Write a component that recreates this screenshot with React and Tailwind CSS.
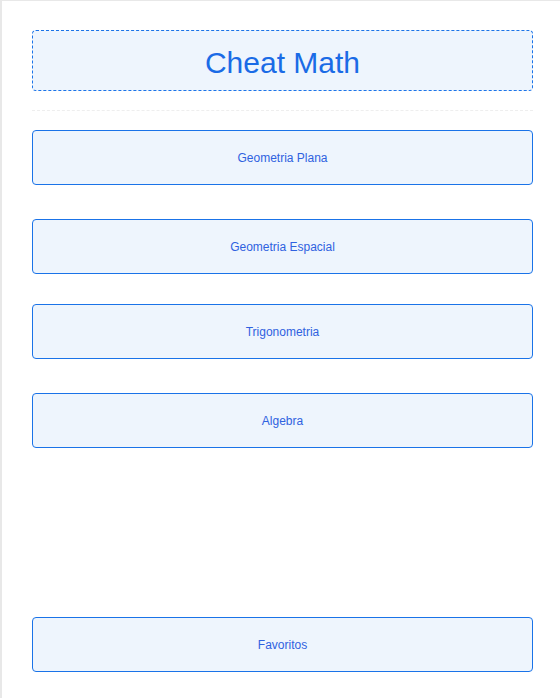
const topics = [
  { label: 'Geometria Plana', mt: 'mt-0' },
  { label: 'Geometria Espacial', mt: 'mt-[34px]' },
  { label: 'Trigonometria', mt: 'mt-[30px]' },
  { label: 'Algebra', mt: 'mt-[34px]' },
];

function TopicButton({ label, className = '' }) {
  return (
    <button
      className={`w-full h-[55px] flex items-center justify-center bg-[#eef5fd] border border-[#1a73e8] rounded-[4px] text-[12px] text-[#2f62e0] ${className}`}
    >
      {label}
    </button>
  );
}

export default function App() {
  return (
    <div
      className="h-[698px] w-[560px] bg-white border-t border-l-2 border-[#e8e8e8] pl-[30px] pr-[27px] pt-[29px] flex flex-col"
      style={{ fontFamily: '"Liberation Sans", Arial, sans-serif' }}
    >
      <div className="h-[61px] flex items-center justify-center bg-[#eef5fd] border border-dashed border-[#1a73e8] rounded-[4px]">
        <h1 className="mt-[4px] text-[30px] text-[#1a6be6] leading-none">Cheat Math</h1>
      </div>

      <hr className="mt-[19px] mb-[19px] border-t border-dashed border-[#eeeeee]" />

      {topics.map((t) => (
        <TopicButton key={t.label} label={t.label} className={t.mt} />
      ))}

      <div className="flex-1" />

      <TopicButton label="Favoritos" className="mb-[26px]" />
    </div>
  );
}
